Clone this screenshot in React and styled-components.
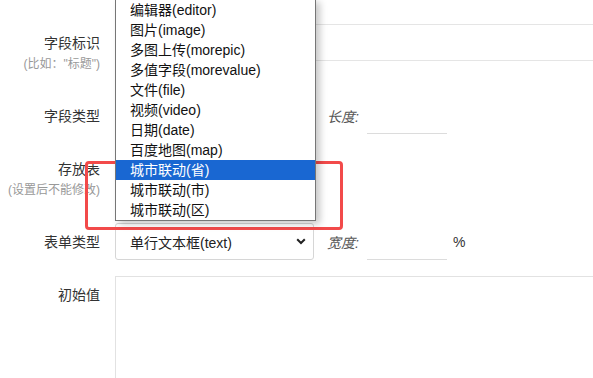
import React from "react";
import styled, { createGlobalStyle } from "styled-components";

const Global = createGlobalStyle`
  html, body { margin: 0; padding: 0; background: #fff; overflow: hidden; }
  body { font-family: "Liberation Sans", "Noto Sans CJK SC", sans-serif; color: #333; }
`;

const Form = styled.div`
  position: relative;
  width: 720px;
  padding-top: 24px;
  display: flex;
  flex-direction: column;
  gap: 16px;
`;

const Row = styled.div`
  display: flex;
  align-items: flex-start;
  gap: 15px;
  min-height: ${(p) => (p.$tall ? 57 : 37)}px;
`;

const LabelCol = styled.div`
  width: 100px;
  flex: none;
  display: flex;
  flex-direction: column;
  align-items: flex-end;
  padding-top: 9px;
`;

const Label = styled.div`
  font-size: 14px;
  line-height: 20px;
  color: #333;
  white-space: nowrap;
`;

const Sub = styled.div`
  margin-top: 1px;
  font-size: 12px;
  line-height: 20px;
  color: #999;
  white-space: nowrap;
`;

const Control = styled.div`
  flex: 1;
  display: flex;
  align-items: center;
  min-width: 0;
`;

const TextInput = styled.div`
  flex: 1;
  height: 37px;
  box-sizing: border-box;
  border: 1px solid #e5e5e5;
`;

const SelectWrap = styled.div`
  position: relative;
  flex: none;
`;

const SelectBox = styled.div`
  width: 199px;
  height: 37px;
  box-sizing: border-box;
  border: 1px solid #d6d6d6;
  border-radius: 3px;
  display: flex;
  align-items: center;
  justify-content: space-between;
  padding: 0 7px 0 14px;
  font-size: 14px;
  color: #222;
  background: #fff;
`;

const InlineLabel = styled.span`
  margin-left: 13px;
  font-size: 14px;
  font-style: italic;
  color: #555;
  white-space: nowrap;
`;

const SmallInput = styled.div`
  width: 80px;
  height: 37px;
  box-sizing: border-box;
  margin-left: 8px;
  border-bottom: 1px solid #dcdcdc;
`;

const Unit = styled.span`
  margin-left: 6px;
  font-size: 14px;
  color: #333;
`;

const TextArea = styled.div`
  flex: 1;
  height: 220px;
  box-sizing: border-box;
  border: 1px solid #e2e2e2;
`;

const Dropdown = styled.ul`
  position: absolute;
  left: 0;
  bottom: calc(100% + 2px);
  width: 201px;
  box-sizing: border-box;
  margin: 0;
  padding: 0;
  list-style: none;
  background: #fff;
  border: 1px solid #767676;
  box-shadow: 4px 3px 7px rgba(0, 0, 0, 0.22);
  z-index: 3;
`;

const Option = styled.li`
  height: 20px;
  line-height: 20px;
  padding: 0 14px;
  font-size: 14px;
  white-space: nowrap;
  color: ${(p) => (p.$active ? "#fff" : "#111")};
  background: ${(p) => (p.$active ? "#1967d2" : "transparent")};
`;

const Annotation = styled.div`
  position: absolute;
  left: 85px;
  top: 161px;
  width: 258px;
  height: 69px;
  box-sizing: border-box;
  border: 3px solid #f24a4a;
  border-radius: 4px;
  z-index: 2;
  pointer-events: none;
`;

const Chevron = () => (
  <svg width="10" height="7" viewBox="0 0 10 7" aria-hidden="true">
    <path d="M1.2 1.2 L5 5 L8.8 1.2" fill="none" stroke="#222" strokeWidth="2" />
  </svg>
);

const options = [
  "编辑器(editor)",
  "图片(image)",
  "多图上传(morepic)",
  "多值字段(morevalue)",
  "文件(file)",
  "视频(video)",
  "日期(date)",
  "百度地图(map)",
  "城市联动(省)",
  "城市联动(市)",
  "城市联动(区)",
];

export default function App() {
  return (
    <>
      <Global />
      <Form>
        <Row $tall>
          <LabelCol>
            <Label>字段标识</Label>
            <Sub>(比如："标题")</Sub>
          </LabelCol>
          <Control>
            <TextInput />
          </Control>
        </Row>
        <Row>
          <LabelCol>
            <Label>字段类型</Label>
          </LabelCol>
          <Control>
            <SelectWrap>
              <SelectBox>
                <span />
                <Chevron />
              </SelectBox>
            </SelectWrap>
            <InlineLabel>长度:</InlineLabel>
            <SmallInput />
          </Control>
        </Row>
        <Row $tall>
          <LabelCol>
            <Label>存放表</Label>
            <Sub>(设置后不能修改)</Sub>
          </LabelCol>
          <Control>
            <SelectWrap>
              <SelectBox>
                <span />
                <Chevron />
              </SelectBox>
            </SelectWrap>
          </Control>
        </Row>
        <Row>
          <LabelCol>
            <Label>表单类型</Label>
          </LabelCol>
          <Control>
            <SelectWrap>
              <SelectBox>
                <span>单行文本框(text)</span>
                <Chevron />
              </SelectBox>
              <Dropdown>
                {options.map((o) => (
                  <Option key={o} $active={o === "城市联动(省)"}>
                    {o}
                  </Option>
                ))}
              </Dropdown>
            </SelectWrap>
            <InlineLabel>宽度:</InlineLabel>
            <SmallInput />
            <Unit>%</Unit>
          </Control>
        </Row>
        <Row>
          <LabelCol>
            <Label>初始值</Label>
          </LabelCol>
          <Control>
            <TextArea />
          </Control>
        </Row>
        <Annotation />
      </Form>
    </>
  );
}
